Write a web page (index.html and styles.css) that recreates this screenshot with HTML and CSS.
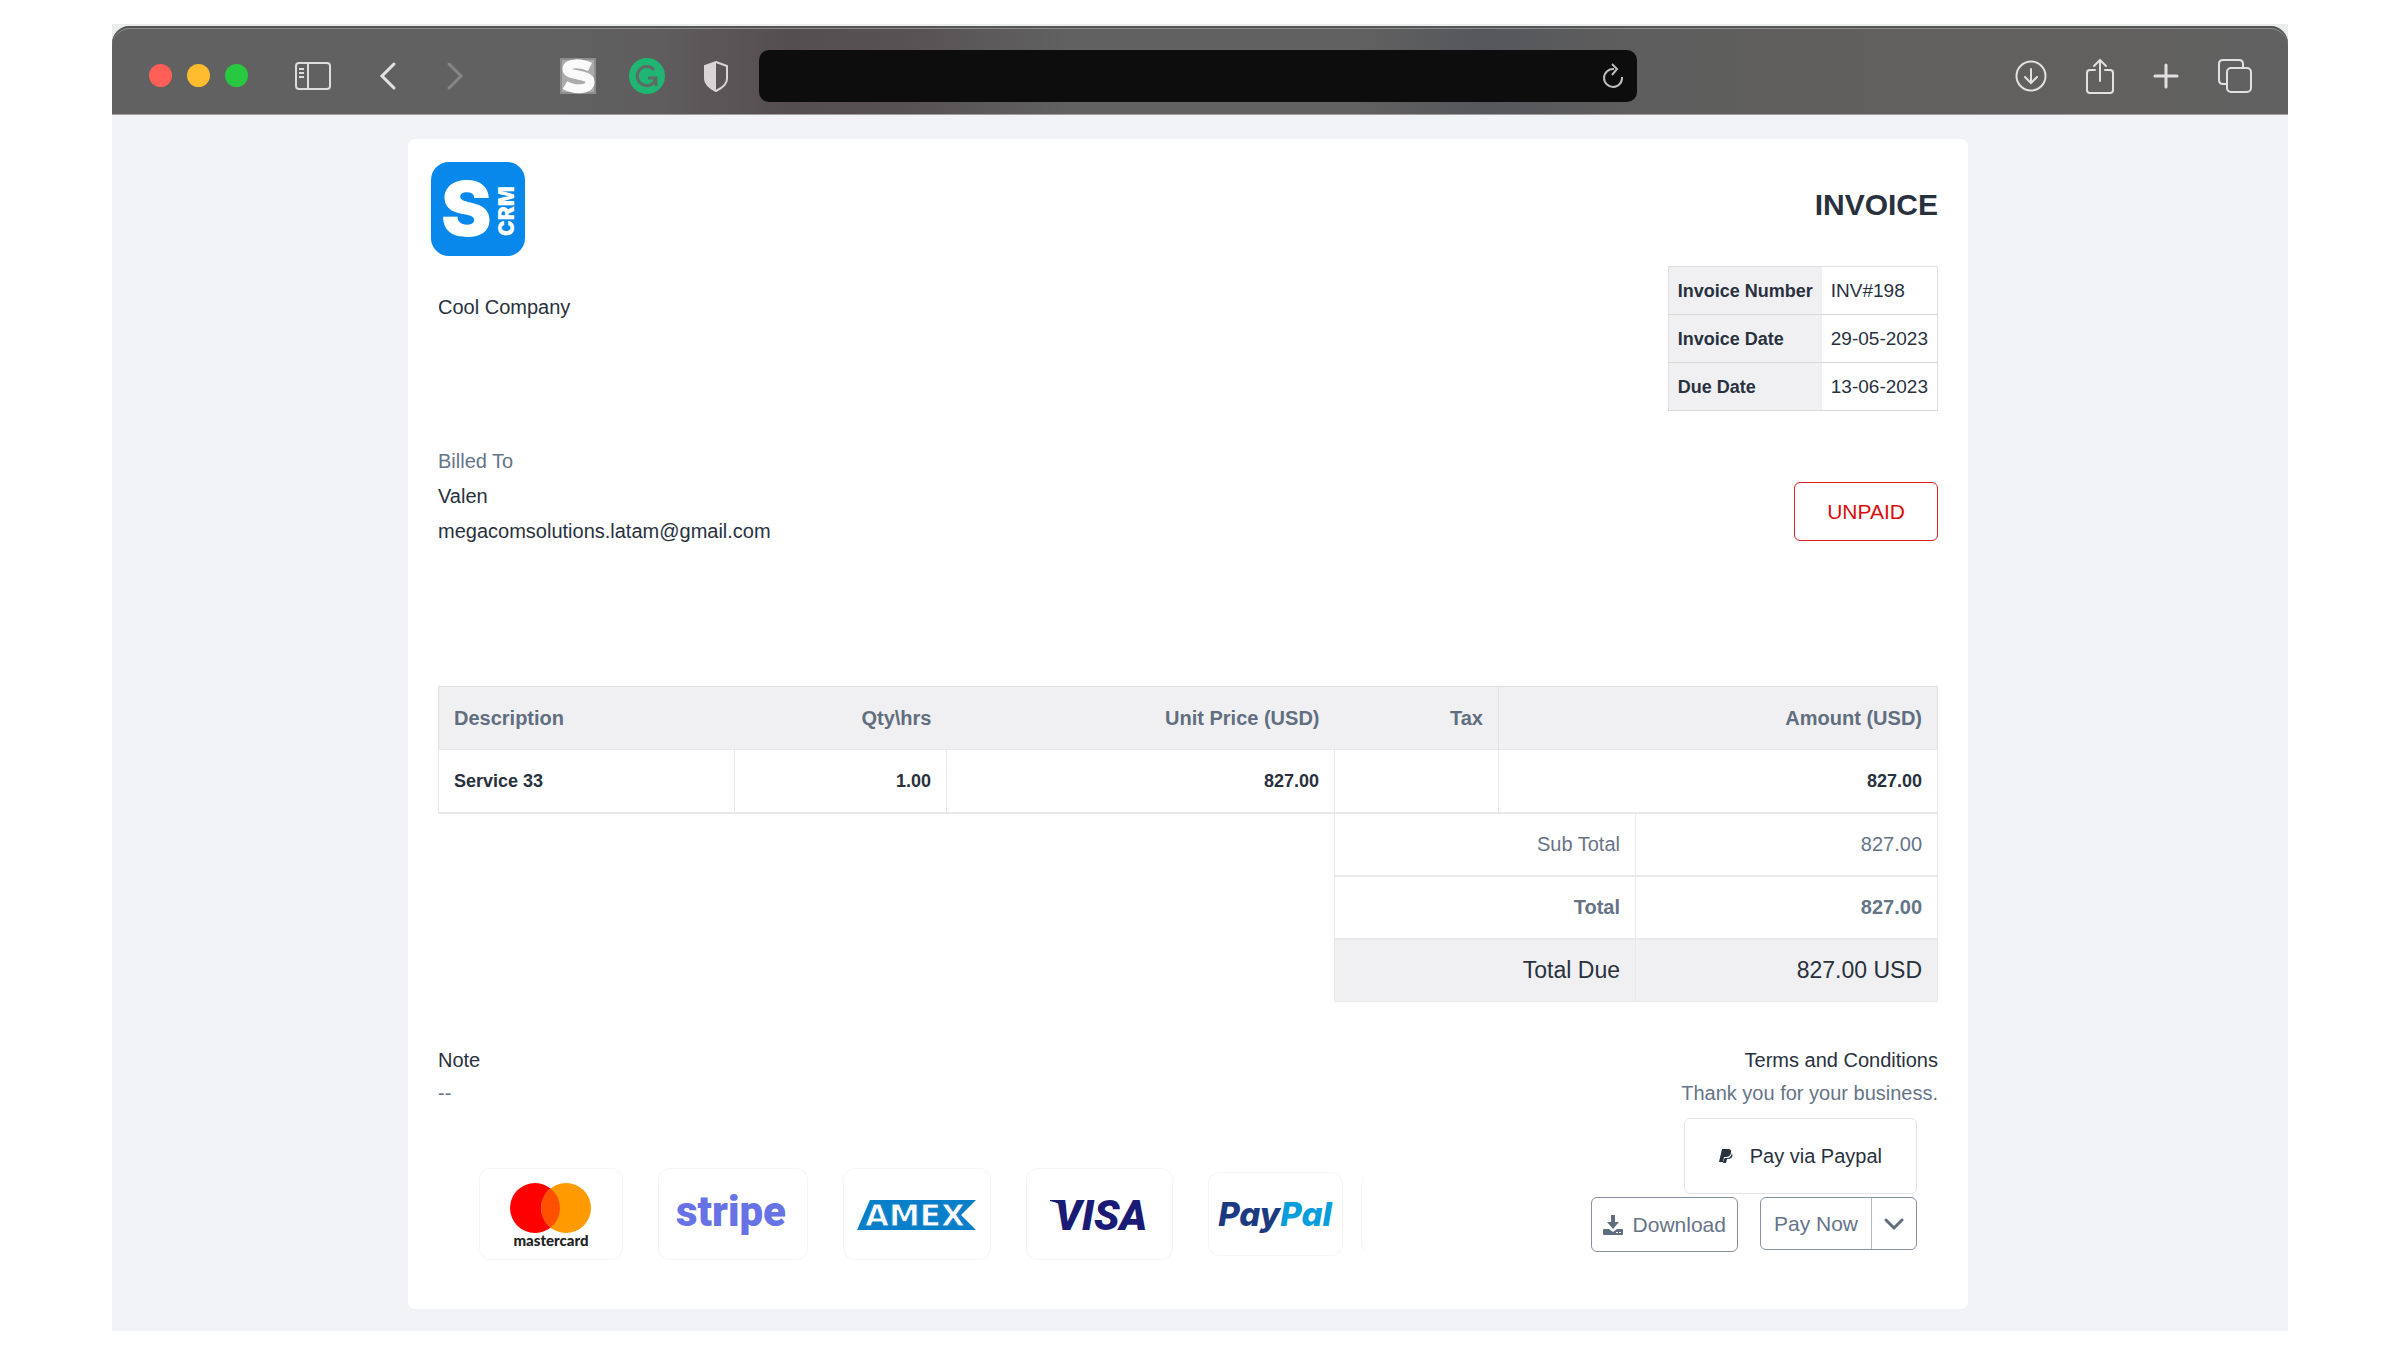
FILE: index.html
```html
<!DOCTYPE html>
<html lang="en">
<head>
    <meta charset="utf-8">
    <title>Invoice INV#198</title>
    <link rel="stylesheet" href="styles.css">
</head>
<body>
<div class="browser">
    <div class="toolbar-wrap">
        <div class="toolbar">
            <div class="lights">
                <span class="light red"></span>
                <span class="light yellow"></span>
                <span class="light green"></span>
            </div>
            <button class="tool sidebar-btn" aria-label="Sidebar">
                <svg width="38" height="30" viewBox="0 0 38 30" fill="none" stroke="#dedcdc" stroke-width="2">
                    <rect x="2" y="2" width="34" height="26" rx="3"/>
                    <path d="M14 2v26M5 8h5M5 12h5M5 16h5"/>
                </svg>
            </button>
            <button class="tool back-btn" aria-label="Back">
                <svg width="18" height="28" viewBox="0 0 18 28" fill="none" stroke="#e4e2e2" stroke-width="3" stroke-linecap="round"><path d="M15 2 3 14l12 12"/></svg>
            </button>
            <button class="tool forward-btn" aria-label="Forward">
                <svg width="18" height="28" viewBox="0 0 18 28" fill="none" stroke="#858585" stroke-width="3" stroke-linecap="round"><path d="M3 2l12 12L3 26"/></svg>
            </button>
            <button class="tool ext-s" aria-label="Extension">
                <svg width="36" height="36" viewBox="0 0 36 36">
                    <rect x="1" y="1" width="34" height="34" fill="#ababab" stroke="#8e8e8e" stroke-width="2"/>
                    <path d="M30 9C22 5 7 4 7 11c0 8 23 4 23 13 0 9-17 8-25 3" fill="none" stroke="#fafafa" stroke-width="9"/>
                </svg>
            </button>
            <button class="tool ext-g" aria-label="Grammar check">
                <svg width="36" height="36" viewBox="0 0 36 36" fill="none">
                    <circle cx="18" cy="18" r="18" fill="#1fb673"/>
                    <path d="M25 12a9.500 9.500 0 1 0 2 8h-8M27 20v8" stroke="#5d6b64" stroke-width="3"/>
                </svg>
            </button>
            <button class="tool shield" aria-label="Privacy report">
                <svg width="26" height="32" viewBox="0 0 26 32">
                    <path d="M13 2 24 6v13c0 5-5 9-11 12C7 28 2 24 2 19V6z" fill="none" stroke="#d9d5d7" stroke-width="2"/>
                    <path d="M13 2v29C7 28 2 24 2 19V6z" fill="#d9d5d7"/>
                </svg>
            </button>
            <div class="address">
                <input type="text" aria-label="Address">
                <button class="tool" aria-label="Reload">
                    <svg width="22" height="26" viewBox="0 0 22 26" fill="none" stroke="#bdbdbd" stroke-width="2"><path d="M12 6a9 9 0 1 0 8 8M10 1l5 5-5 6"/></svg>
                </button>
            </div>
            <div class="tools-right">
                <button class="tool" aria-label="Downloads">
                    <svg width="32" height="32" viewBox="0 0 32 32" fill="none" stroke="#e2e0e0" stroke-width="2" stroke-linecap="round"><circle cx="16" cy="16" r="14.500"/><path d="M16 9v14M10 17l6 6 6-6"/></svg>
                </button>
                <button class="tool" aria-label="Share">
                    <svg width="28" height="36" viewBox="0 0 28 36" fill="none" stroke="#e2e0e0" stroke-width="2" stroke-linecap="round"><path d="M9 12H4q-3 0-3 3v17q0 3 3 3h20q3 0 3-3V15q0-3-3-3h-5M14 23V2M8 8l6-6 6 6"/></svg>
                </button>
                <button class="tool" aria-label="New tab">
                    <svg width="26" height="26" viewBox="0 0 26 26" fill="none" stroke="#e2e0e0" stroke-width="3" stroke-linecap="round"><path d="M13 2v22M2 13h22"/></svg>
                </button>
                <button class="tool" aria-label="Tab overview">
                    <svg width="34" height="34" viewBox="0 0 34 34" fill="none" stroke="#e2e0e0" stroke-width="2"><rect x="9" y="9" width="24" height="24" rx="4"/><path d="M8 25H5q-4 0-4-4V5q0-4 4-4h16q4 0 4 4v3"/></svg>
                </button>
            </div>
        </div>
    </div>

    <div class="page">
        <div class="invoice">
            <div class="invoice-head">
                <div>
                    <svg class="logo" width="94" height="94" viewBox="0 0 94 94">
                        <rect width="94" height="94" rx="18" fill="#0788ea"/>
                        <text x="10" y="74" class="logo-s">S</text>
                        <text class="logo-crm" transform="translate(83 74) rotate(-90)">CRM</text>
                    </svg>
                    <div class="company">Cool Company</div>
                </div>
                <div class="head-right">
                    <h1>INVOICE</h1>
                    <table class="meta">
                        <tr><th>Invoice Number</th><td>INV#198</td></tr>
                        <tr><th>Invoice Date</th><td>29-05-2023</td></tr>
                        <tr><th>Due Date</th><td>13-06-2023</td></tr>
                    </table>
                </div>
            </div>

            <div class="billing">
                <div>
                    <div class="muted">Billed To</div>
                    <div>Valen</div>
                    <div>megacomsolutions.latam@gmail.com</div>
                </div>
                <div class="status">UNPAID</div>
            </div>

            <table class="items">
                <colgroup>
                    <col class="c-desc"><col class="c-qty"><col class="c-price"><col class="c-tax"><col class="c-gap"><col>
                </colgroup>
                <thead>
                    <tr>
                        <th class="left">Description</th>
                        <th>Qty\hrs</th>
                        <th>Unit Price (USD)</th>
                        <th>Tax</th>
                        <th class="amount" colspan="2">Amount (USD)</th>
                    </tr>
                </thead>
                <tbody>
                    <tr class="item">
                        <td class="left">Service 33</td>
                        <td>1.00</td>
                        <td>827.00</td>
                        <td></td>
                        <td colspan="2">827.00</td>
                    </tr>
                    <tr>
                        <td class="blank" colspan="3" rowspan="3"></td>
                        <td colspan="2">Sub Total</td>
                        <td>827.00</td>
                    </tr>
                    <tr class="total">
                        <td colspan="2">Total</td>
                        <td>827.00</td>
                    </tr>
                    <tr class="due">
                        <td colspan="2">Total Due</td>
                        <td>827.00 USD</td>
                    </tr>
                </tbody>
            </table>

            <div class="notes">
                <div>
                    <div>Note</div>
                    <div class="muted">--</div>
                </div>
                <div class="terms">
                    <div>Terms and Conditions</div>
                    <div class="muted">Thank you for your business.</div>
                </div>
            </div>

            <div class="footer">
                <div class="methods">
                    <div class="method">
                        <svg width="144" height="92" viewBox="0 0 144 92">
                            <circle cx="56" cy="40" r="25" fill="#f00"/>
                            <circle cx="87" cy="40" r="25" fill="#ff9a00"/>
                            <path d="M71.500 20.400a25 25 0 0 1 0 39.200 25 25 0 0 1 0-39.200z" fill="#ff5000"/>
                            <text x="72" y="78" class="mastercard">mastercard</text>
                        </svg>
                    </div>
                    <div class="method">
                        <svg width="150" height="92" viewBox="0 0 150 92">
                            <text x="73" y="58" class="stripe">stripe</text>
                        </svg>
                    </div>
                    <div class="method">
                        <svg width="148" height="92" viewBox="0 0 148 92">
                            <path d="M14 62 27 32H116L133 32 118 47l15 15z" fill="#0a7fc9"/>
                            <text x="72" y="58" class="amex">AMEX</text>
                        </svg>
                    </div>
                    <div class="method">
                        <svg width="147" height="92" viewBox="0 0 147 92">
                            <path d="M24 32h10q6 1 6 8-6-5-16-7z" fill="#191b75"/>
                            <text x="75" y="62" class="visa">VISA</text>
                        </svg>
                    </div>
                    <div class="method">
                        <svg width="135" height="84" viewBox="0 0 135 84">
                            <text x="67" y="54" class="paypal">Pay<tspan>Pal</tspan></text>
                        </svg>
                    </div>
                    <div class="method-edge"></div>
                </div>

                <div class="actions">
                    <a class="pay-option" href="#paypal">
                        <svg width="14" height="16" viewBox="0 0 14 16" fill="#28313d"><path d="M3 1h6q4 0 3 4-1 4-5 4H5l-1 5H0z"/><path d="M13 5q2 6-5 6l-1 4H4l1-4 1-1h2q4 0 5-5z"/></svg>
                        Pay via Paypal
                    </a>
                    <div class="buttons">
                        <button class="btn">
                            <svg width="20" height="20" viewBox="0 0 20 20" fill="#5f6d80"><path d="M8 0h4v7h4l-6 7-6-7h4z"/><path fill-rule="evenodd" d="M1 14h5l4 3 4-3h5q1 0 1 1v4q0 1-1 1H1q-1 0-1-1v-4q0-1 1-1zm12 3v1h2v-1zm3 0v1h2v-1z"/></svg>
                            Download
                        </button>
                        <div class="btn-group">
                            <button class="pay-now">Pay Now</button>
                            <button class="toggle" aria-label="Payment options">
                                <svg width="20" height="14" viewBox="0 0 20 14" fill="none" stroke="#5f6d80" stroke-width="3" stroke-linecap="round"><path d="M2 3l8 8 8-8"/></svg>
                            </button>
                        </div>
                    </div>
                </div>
            </div>
        </div>
    </div>
</div>
</body>
</html>
```
FILE: styles.css
```css
body {
    margin: 0;
    background: #fff;
    color: #28313d;
    font: 20px/34px "Helvetica Neue", "Liberation Sans", Arial, sans-serif;
}

button, input {
    font: inherit;
    color: inherit;
    padding: 0;
    border: 0;
    background: none;
}

svg {
    display: block;
    overflow: visible;
}

.browser {
    margin: 24px 112px 18px;
}

/* toolbar */
.toolbar-wrap {
    background: #ebecec;
    padding-top: 2px;
}
.toolbar {
    display: flex;
    align-items: center;
    height: 89px;
    padding: 11px 36px 0 37px;
    box-sizing: border-box;
    border-radius: 18px 18px 0 0;
    border-bottom: 1px solid #a39d9d;
    box-shadow: inset 0 2px #555, inset 0 3px #8c8c8c;
    background: linear-gradient(to right, #616161 20%, #5f5d5e 25%, #554e51 31%, #565153 36%, #616161 44%, #616161 57%, #56575b 63%, #5e5e5e 70%, #62605e 85%, #616161);
}
.tool {
    flex: none;
}
.lights {
    display: flex;
    gap: 15px;
    margin-right: 46px;
}
.light {
    width: 23px;
    height: 23px;
    border-radius: 50%;
}
.red { background: #ff5f57; }
.yellow { background: #febc2e; }
.green { background: #28c840; }
.sidebar-btn { margin-right: 47px; }
.back-btn { margin-right: 49px; }
.forward-btn { margin-right: 96px; }
.ext-s { margin-right: 33px; }
.ext-g { margin-right: 38px; }
.shield { margin-right: 30px; }
.address {
    display: flex;
    align-items: center;
    flex: 0 1 878px;
    box-sizing: border-box;
    height: 52px;
    padding-right: 13px;
    border-radius: 10px;
    background: #0d0d0d;
}
.address input {
    flex: 1;
    min-width: 0;
    outline: none;
    color: #ddd;
}
.tools-right {
    display: flex;
    align-items: center;
    gap: 39px;
    margin-left: auto;
}

/* page */
.page {
    background: #f2f3f7;
    padding: 24px 320px 22px 296px;
}
.invoice {
    background: #fff;
    border-radius: 7px;
    padding: 23px 30px 49px;
}
.muted {
    color: #667488;
}
.invoice-head, .billing, .notes, .footer {
    display: flex;
    justify-content: space-between;
    align-items: flex-start;
}
.logo {
    margin: 0 0 34px -7px;
}
.logo-s, .logo-crm {
    font-family: Inter, sans-serif;
    font-weight: 900;
    fill: #fff;
}
.logo-s {
    font-size: 76px;
}
.logo-crm {
    font-size: 21px;
}
h1 {
    margin: 26px 0 44px;
    font-size: 30px;
    line-height: 34px;
    text-align: right;
}
.meta {
    border-collapse: collapse;
    border: 1px solid #dfdfdf;
}
.meta tr {
    height: 48px;
    border-bottom: 1px solid #d8d8d8;
}
.meta th, .meta td {
    padding: 0 9px;
    text-align: left;
}
.meta th {
    font-size: 18px;
    background: #f0f0f3;
}
.meta td {
    font-size: 19px;
}

.billing {
    margin-top: 33px;
    line-height: 35px;
}
.status {
    margin-top: 38px;
    padding: 11px 32px;
    border: 1px solid #de2020;
    border-radius: 6px;
    color: #d90d0d;
    font-size: 21px;
}

.items {
    width: 100%;
    margin-top: 137px;
    table-layout: fixed;
    border-collapse: collapse;
}
.c-desc { width: 296px; }
.c-qty { width: 212px; }
.c-price { width: 388px; }
.c-tax { width: 164px; }
.c-gap { width: 137px; }
.items tr {
    height: 63px;
}
.items th, .items td {
    padding: 0 15px;
    text-align: right;
}
.items .left {
    text-align: left;
}
.items th {
    color: #616e80;
    background: #f0f0f3;
}
.items thead tr {
    border: 1px solid #dddfe1;
}
.items th.amount {
    border-left: 1px solid #e0e1e3;
}
.items td {
    color: #667488;
    border: 1px solid #e7e9eb;
    border-bottom-width: 2px;
}
.items .item td {
    font-size: 18px;
    font-weight: bold;
    color: #28313d;
}
.items td.blank {
    border: 0;
}
.items .total td {
    font-weight: bold;
}
.items .due td {
    font-size: 23px;
    color: #28313d;
    background: #f0f0f3;
    border-bottom-width: 1px;
}

.notes {
    margin-top: 42px;
    line-height: 33px;
}
.terms {
    text-align: right;
}

/* payment methods and buttons */
.footer {
    margin-top: 8px;
}
.methods {
    display: flex;
    align-items: center;
    gap: 35px;
    margin: 50px 0 0 41px;
}
.method {
    border-radius: 12px;
    box-shadow: inset 0 0 0 1px #f5f5f5;
}
.method-edge {
    width: 12px;
    height: 80px;
    margin-left: -17px;
    border-left: 1px solid #f3f3f3;
    border-radius: 12px 0 0 12px;
}
.methods text {
    text-anchor: middle;
}
.mastercard {
    font: 900 15px Lato, sans-serif;
    fill: #222;
}
.stripe {
    font: 900 42px Roboto, sans-serif;
    fill: #6772e5;
}
.amex {
    font: bold 31px "DejaVu Sans", sans-serif;
    fill: #fff;
    stroke: #0a7fc9;
    stroke-width: 1px;
}
.visa {
    font: italic 900 42px Roboto, sans-serif;
    fill: #191b75;
}
.paypal {
    font: italic 800 33px Inter, sans-serif;
    fill: #1b3a80;
}
.paypal tspan {
    fill: #089ddb;
}

.actions {
    display: flex;
    flex-direction: column;
    align-items: flex-end;
    gap: 3px;
    margin-right: 21px;
}
.pay-option {
    display: flex;
    align-items: center;
    gap: 17px;
    height: 74px;
    padding: 0 34px;
    border: 1px solid #e4e5e8;
    border-radius: 6px;
    color: #28313d;
    text-decoration: none;
}
.buttons {
    display: flex;
    align-items: flex-start;
    gap: 22px;
    color: #667488;
    font-size: 21px;
}
.btn, .btn-group {
    display: flex;
    align-items: center;
    border: 1px solid #8590a0;
    border-radius: 6px;
}
.btn {
    gap: 10px;
    height: 55px;
    padding: 0 11px;
}
.btn-group {
    height: 51px;
}
.pay-now {
    height: 51px;
    padding: 0 13px;
    border-right: 1px solid #b4bbc5;
}
.toggle {
    height: 51px;
    padding: 0 12px;
}
```
